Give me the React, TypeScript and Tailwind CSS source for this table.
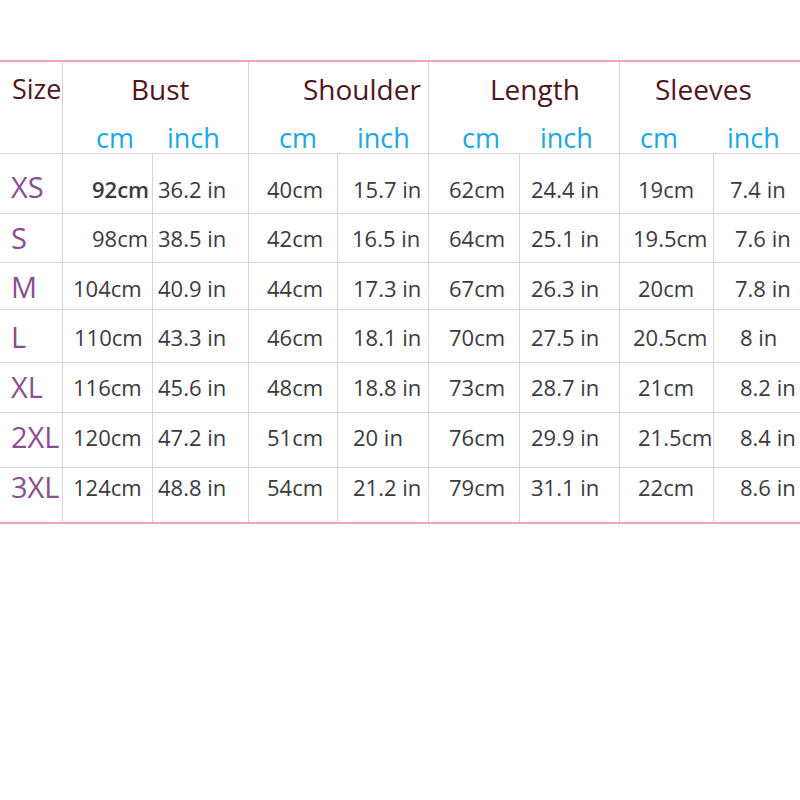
const rows = [
  {
    size: "XS",
    h: "h-[60px]",
    pt: "pt-[20px]",
    labelPt: "pt-[18px]",
    cells: [
      { t: "92cm", pl: "pl-[29px]", bold: true },
      { t: "36.2 in", pl: "pl-[5px]" },
      { t: "40cm", pl: "pl-[18px]" },
      { t: "15.7 in", pl: "pl-[15px]" },
      { t: "62cm", pl: "pl-[20px]" },
      { t: "24.4 in", pl: "pl-[11px]" },
      { t: "19cm", pl: "pl-[18px]" },
      { t: "7.4 in", pl: "pl-[16px]" },
    ],
  },
  {
    size: "S",
    h: "h-[49px]",
    pt: "pt-[9px]",
    labelPt: "pt-[9px]",
    cells: [
      { t: "98cm", pl: "pl-[29px]" },
      { t: "38.5 in", pl: "pl-[5px]" },
      { t: "42cm", pl: "pl-[18px]" },
      { t: "16.5 in", pl: "pl-[14px]" },
      { t: "64cm", pl: "pl-[20px]" },
      { t: "25.1 in", pl: "pl-[11px]" },
      { t: "19.5cm", pl: "pl-[13px]" },
      { t: "7.6 in", pl: "pl-[21px]" },
    ],
  },
  {
    size: "M",
    h: "h-[47px]",
    pt: "pt-[10px]",
    labelPt: "pt-[9px]",
    cells: [
      { t: "104cm", pl: "pl-[10px]" },
      { t: "40.9 in", pl: "pl-[5px]" },
      { t: "44cm", pl: "pl-[18px]" },
      { t: "17.3 in", pl: "pl-[15px]" },
      { t: "67cm", pl: "pl-[20px]" },
      { t: "26.3 in", pl: "pl-[11px]" },
      { t: "20cm", pl: "pl-[18px]" },
      { t: "7.8 in", pl: "pl-[21px]" },
    ],
  },
  {
    size: "L",
    h: "h-[53px]",
    pt: "pt-[12px]",
    labelPt: "pt-[12px]",
    cells: [
      { t: "110cm", pl: "pl-[11px]" },
      { t: "43.3 in", pl: "pl-[5px]" },
      { t: "46cm", pl: "pl-[18px]" },
      { t: "18.1 in", pl: "pl-[15px]" },
      { t: "70cm", pl: "pl-[20px]" },
      { t: "27.5 in", pl: "pl-[11px]" },
      { t: "20.5cm", pl: "pl-[13px]" },
      { t: "8 in", pl: "pl-[26px]" },
    ],
  },
  {
    size: "XL",
    h: "h-[50px]",
    pt: "pt-[9px]",
    labelPt: "pt-[9px]",
    cells: [
      { t: "116cm", pl: "pl-[10px]" },
      { t: "45.6 in", pl: "pl-[5px]" },
      { t: "48cm", pl: "pl-[18px]" },
      { t: "18.8 in", pl: "pl-[15px]" },
      { t: "73cm", pl: "pl-[20px]" },
      { t: "28.7 in", pl: "pl-[11px]" },
      { t: "21cm", pl: "pl-[18px]" },
      { t: "8.2 in", pl: "pl-[26px]" },
    ],
  },
  {
    size: "2XL",
    h: "h-[55px]",
    pt: "pt-[9px]",
    labelPt: "pt-[9px]",
    cells: [
      { t: "120cm", pl: "pl-[10px]" },
      { t: "47.2 in", pl: "pl-[5px]" },
      { t: "51cm", pl: "pl-[18px]" },
      { t: "20 in", pl: "pl-[15px]" },
      { t: "76cm", pl: "pl-[20px]" },
      { t: "29.9 in", pl: "pl-[11px]" },
      { t: "21.5cm", pl: "pl-[18px]" },
      { t: "8.4 in", pl: "pl-[26px]" },
    ],
  },
  {
    size: "3XL",
    h: "h-[56px]",
    pt: "pt-[4px]",
    labelPt: "pt-[4px]",
    cells: [
      { t: "124cm", pl: "pl-[10px]" },
      { t: "48.8 in", pl: "pl-[5px]" },
      { t: "54cm", pl: "pl-[18px]" },
      { t: "21.2 in", pl: "pl-[15px]" },
      { t: "79cm", pl: "pl-[20px]" },
      { t: "31.1 in", pl: "pl-[11px]" },
      { t: "22cm", pl: "pl-[18px]" },
      { t: "8.6 in", pl: "pl-[26px]" },
    ],
  },
];

// header groups: title offset, cm offset, gap before inch
const groups = [
  { title: "Bust", titlePl: "pl-[68px]", cmPl: "pl-[33px]", inchMl: "ml-[33px]", span: "col-span-2" },
  { title: "Shoulder", titlePl: "pl-[54px]", cmPl: "pl-[30px]", inchMl: "ml-[40px]", span: "col-span-2" },
  { title: "Length", titlePl: "pl-[61px]", cmPl: "pl-[33px]", inchMl: "ml-[40px]", span: "col-span-2" },
  { title: "Sleeves", titlePl: "pl-[35px]", cmPl: "pl-[20px]", inchMl: "ml-[49px]", span: "col-span-2" },
];

const cols = "grid grid-cols-[63px_90px_96px_89px_91px_91px_100px_94px_86px]";

export default function App() {
  return (
    <div className="w-[800px] h-[800px] bg-white pt-[60px] font-['Open_Sans',sans-serif]">
      <div className="h-[2px] bg-[#eca6bd]" />

      <div className={`${cols} h-[92px] border-b border-[#d4d4d4]`}>
        <div className="border-r border-[#d4d4d4] pl-[12px] pt-[9px]">
          <span className="text-[27px] leading-[36px] text-[#4f161d]">Size</span>
        </div>
        {groups.map((g, i) => (
          <div
            key={g.title}
            className={`${g.span} flex flex-col pt-[9px] ${i < groups.length - 1 ? "border-r border-[#d4d4d4]" : ""}`}
          >
            <div className={`${g.titlePl} text-[28px] leading-[36px] text-[#4f161d]`}>{g.title}</div>
            <div className={`${g.cmPl} mt-[13px] flex text-[27px] leading-[36px] text-[#1aa9e0]`}>
              <span>cm</span>
              <span className={g.inchMl}>inch</span>
            </div>
          </div>
        ))}
      </div>

      {rows.map((r, ri) => (
        <div
          key={r.size}
          className={`${cols} ${r.h} ${ri === rows.length - 1 ? "border-b-2 border-[#eca6bd]" : "border-b border-[#d4d4d4]"}`}
        >
          <div className={`border-r border-[#d4d4d4] pl-[11px] ${r.labelPt}`}>
            <span className="text-[29px] leading-[30px] text-[#8a4e93]">{r.size}</span>
          </div>
          {r.cells.map((c, ci) => (
            <div
              key={ci}
              className={`${c.pl} ${r.pt} whitespace-nowrap ${ci < 7 ? "border-r border-[#d4d4d4]" : ""}`}
            >
              <span className={`text-[22px] leading-[30px] text-[#3b3a41] ${c.bold ? "font-semibold" : ""}`}>
                {c.t}
              </span>
            </div>
          ))}
        </div>
      ))}
    </div>
  );
}
